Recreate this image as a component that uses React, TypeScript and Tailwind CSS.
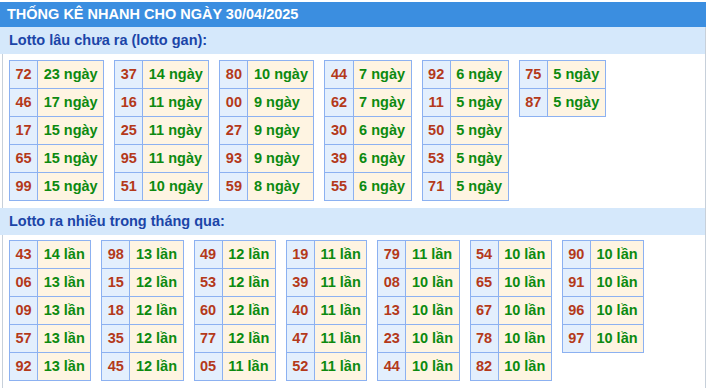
import React from "react";

const gan: [string, string][][] = [
  [["72", "23"], ["46", "17"], ["17", "15"], ["65", "15"], ["99", "15"]],
  [["37", "14"], ["16", "11"], ["25", "11"], ["95", "11"], ["51", "10"]],
  [["80", "10"], ["00", "9"], ["27", "9"], ["93", "9"], ["59", "8"]],
  [["44", "7"], ["62", "7"], ["30", "6"], ["39", "6"], ["55", "6"]],
  [["92", "6"], ["11", "5"], ["50", "5"], ["53", "5"], ["71", "5"]],
  [["75", "5"], ["87", "5"]],
];

const nhieu: [string, string][][] = [
  [["43", "14"], ["06", "13"], ["09", "13"], ["57", "13"], ["92", "13"]],
  [["98", "13"], ["15", "12"], ["18", "12"], ["35", "12"], ["45", "12"]],
  [["49", "12"], ["53", "12"], ["60", "12"], ["77", "12"], ["05", "11"]],
  [["19", "11"], ["39", "11"], ["40", "11"], ["47", "11"], ["52", "11"]],
  [["79", "11"], ["08", "10"], ["13", "10"], ["23", "10"], ["44", "10"]],
  [["54", "10"], ["65", "10"], ["67", "10"], ["78", "10"], ["82", "10"]],
  [["90", "10"], ["91", "10"], ["96", "10"], ["97", "10"]],
];

function Tbl({ rows, unit }: { rows: [string, string][]; unit: string }) {
  return (
    <table className="border-collapse self-start">
      <tbody>
        {rows.map(([n, v]) => (
          <tr key={n} className="h-[28px]">
            <td className="border border-[#8cb1f1] bg-[#e3effd] p-0 px-[5.5px] text-[#b4391a] text-center">{n}</td>
            <td className="border border-[#8cb1f1] bg-[#fef4e2] p-0 px-[5.5px] text-[#0c8a10]">
              {v} {unit}
            </td>
          </tr>
        ))}
      </tbody>
    </table>
  );
}

export default function App() {
  return (
    <div
      className="mt-[2px] w-[706px] bg-white text-[14.5px] font-bold leading-none"
      style={{ fontFamily: '"Liberation Sans", Arial, sans-serif' }}
    >
      <div className="h-[25px] bg-[#3b8ee0] pl-[7px] flex items-center text-white">
        THỐNG KÊ NHANH CHO NGÀY 30/04/2025
      </div>
      <div className="border-r border-[#c7d0da]">
        <div className="h-[27px] bg-[#d5e8fb] pl-[9px] flex items-center text-[#1b45a8]">
          Lotto lâu chưa ra (lotto gan):
        </div>
        <div className="ml-[2px] border-l border-[#c7d0da] pl-[6px] pt-[6px] pb-[7px] flex gap-[10px]">
          {gan.map((r, i) => (
            <Tbl key={i} rows={r} unit="ngày" />
          ))}
        </div>
        <div className="h-[27px] bg-[#d5e8fb] pl-[9px] flex items-center text-[#1b45a8]">
          Lotto ra nhiều trong tháng qua:
        </div>
        <div className="ml-[2px] border-l border-[#c7d0da] pl-[6px] pt-[5px] pb-[9px] flex gap-[10px]">
          {nhieu.map((r, i) => (
            <Tbl key={i} rows={r} unit="lần" />
          ))}
        </div>
      </div>
    </div>
  );
}
